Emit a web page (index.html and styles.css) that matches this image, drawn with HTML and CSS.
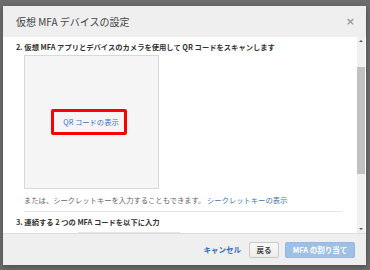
FILE: index.html
```html
<!DOCTYPE html>
<html lang="ja">
<head>
    <meta charset="UTF-8">
    <title>仮想 MFA デバイスの設定</title>
    <link rel="stylesheet" href="styles.css">
</head>
<body>
    <div class="backdrop">
        <div class="modal">
            <div class="modal-header">
                <h2>仮想 MFA デバイスの設定</h2>
                <span class="close">&times;</span>
            </div>

            <div class="modal-body">
                <div class="content">
                    <!-- Step 2 -->
                    <div class="step">
                        <p class="step-title">2. 仮想 MFA アプリとデバイスのカメラを使用して QR コードをスキャンします</p>
                        <div class="qr-box">
                            <span class="qr-link">QR コードの表示</span>
                        </div>
                        <p class="secret">または、シークレットキーを入力することもできます。 <a href="#">シークレットキーの表示</a></p>
                    </div>

                    <!-- Step 3 -->
                    <div class="step step-3">
                        <p class="step-title">3. 連続する 2 つの MFA コードを以下に入力</p>
                        <div class="code-input"></div>
                    </div>
                </div>
                <div class="scrollbar">
                    <span class="arrow up"></span>
                    <div class="track"><div class="thumb"></div></div>
                    <span class="arrow down"></span>
                </div>
            </div>

            <div class="modal-footer">
                <a href="#" class="btn-link">キャンセル</a>
                <button class="btn">戻る</button>
                <button class="btn btn-primary" disabled>MFA の割り当て</button>
            </div>
        </div>
    </div>
</body>
</html>
```

FILE: styles.css
```css
* {
    margin: 0;
    padding: 0;
    box-sizing: border-box;
}

body {
    font-family: "Noto Sans CJK JP", "Liberation Sans", sans-serif;
    background: #6d6d6d;
    width: 370px;
    height: 270px;
    overflow: hidden;
}

.backdrop {
    padding: 6px 4px 5px 3px;
}

.modal {
    width: 363px;
    height: 259px;
    background: white;
    display: flex;
    flex-direction: column;
    box-shadow: 0 2px 6px rgba(0,0,0,0.3);
}

.modal-header {
    height: 31px;
    background: #efefef;
    display: flex;
    align-items: center;
    justify-content: space-between;
    padding: 0 11px 0 13px;
    flex-shrink: 0;
}

.modal-header h2 {
    font-size: 10px;
    font-weight: normal;
    color: #444;
}

.close {
    font-size: 11px;
    font-weight: bold;
    color: #999;
    font-family: "DejaVu Sans", sans-serif;
}

.modal-body {
    flex: 1;
    display: flex;
    overflow: hidden;
}

.content {
    flex: 1;
    padding: 5px 13px 0 13px;
    overflow: hidden;
}

.step-title {
    font-size: 7.3px;
    font-weight: bold;
    color: #333;
    line-height: 10px;
}

.qr-box {
    margin: 3px 0 0 8px;
    width: 135px;
    height: 134px;
    background: #f5f5f5;
    border: 1px solid #d9d9d9;
    display: flex;
    align-items: center;
    justify-content: center;
}

.qr-link {
    font-size: 7.3px;
    color: #3b73b9;
    border: 3px solid #ff0000;
    border-radius: 2px;
    padding: 5px 5px 5px 9px;
    margin-right: 5px;
    line-height: 10px;
}

.secret {
    margin: 6px 0 0 8px;
    font-size: 7.3px;
    color: #666;
    line-height: 10px;
    padding-bottom: 6px;
    border-bottom: 1px solid #e6e6e6;
    margin-right: 2px;
}

.secret a {
    color: #3b73b9;
    text-decoration: none;
}

.step-3 {
    padding-top: 5px;
}

.code-input {
    margin: 5px 0 0 61px;
    width: 104px;
    height: 10px;
    border: 1px solid #e4e4e4;
    border-radius: 2px;
}

.scrollbar {
    width: 8px;
    margin-right: 1px;
    display: flex;
    flex-direction: column;
    background: #f0f0f0;
}

.arrow {
    height: 8px;
    display: flex;
    justify-content: center;
    align-items: center;
}

.arrow::before {
    content: "";
    border-left: 2px solid transparent;
    border-right: 2px solid transparent;
}

.arrow.up::before {
    border-bottom: 2px solid #555;
}

.arrow.down::before {
    border-top: 2px solid #555;
}

.track {
    flex: 1;
    padding-top: 22px;
}

.thumb {
    height: 107px;
    background: #c1c1c1;
}

.modal-footer {
    height: 32px;
    background: #efefef;
    border-top: 1px solid #dcdcdc;
    display: flex;
    align-items: center;
    justify-content: flex-end;
    padding: 0 11px 0 0;
    gap: 6px;
    flex-shrink: 0;
}

.btn-link {
    font-size: 7.5px;
    font-weight: bold;
    color: #2f6eba;
    text-decoration: none;
    margin-right: 2px;
}

.btn {
    font-family: inherit;
    font-size: 7.5px;
    font-weight: bold;
    color: #444;
    width: 30px;
    height: 16px;
    padding: 0;
    background: linear-gradient(#fafafa, #ececec);
    border: 1px solid #c8c8c8;
    border-radius: 2px;
}

.btn-primary {
    width: 70px;
    color: white;
    background: #9ec0e5;
    border-color: #96b9e0;
}
```
